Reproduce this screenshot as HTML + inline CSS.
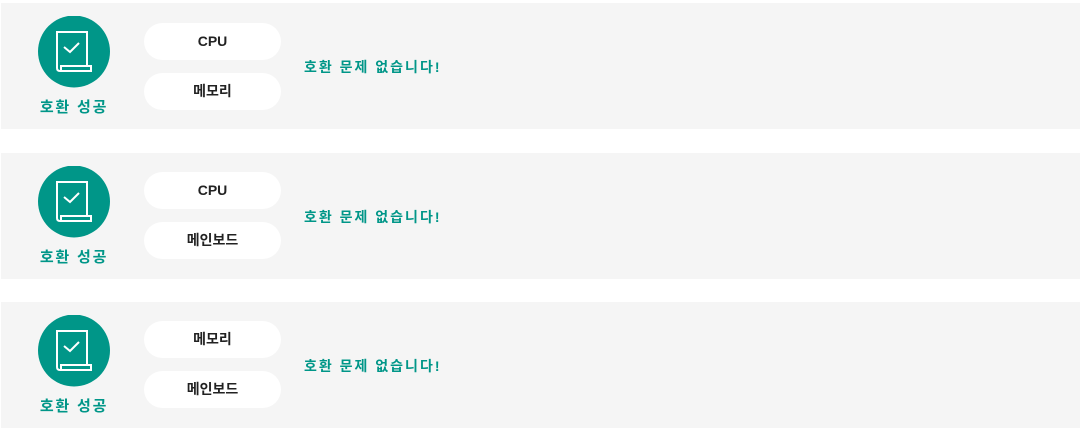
<!DOCTYPE html>
<html><head><meta charset="utf-8"><style>
body{margin:0;width:1082px;height:434px;background:#fff;font-family:"Liberation Sans","Noto Sans CJK KR",sans-serif;position:relative;overflow:hidden}
.p{position:absolute;left:1px;width:1079px;height:126px;background:#f5f5f5}
.ic{position:absolute;left:37px;top:13px}
.lb{position:absolute;left:33px;top:93px;width:80px;text-align:center;color:#009688;font-size:15px;font-weight:bold;letter-spacing:1.8px}
.pill{position:absolute;left:143px;width:137px;height:37px;background:#fff;border-radius:19px;text-align:center;line-height:37px;font-size:14px;font-weight:bold;color:#222}
.msg{position:absolute;left:303px;top:54px;color:#009688;font-size:14px;font-weight:bold;letter-spacing:2px}
</style></head><body>
<div class="p" style="top:3px">
<svg class="ic" width="72" height="72" viewBox="0 0 72 72"><circle cx="36" cy="35.5" r="36" fill="#009688"/><g fill="none" stroke="#fff" stroke-width="2"><path d="M19 52V16h30v33"/><path d="M19 52q0 3 3 3"/><rect x="23" y="50" width="30" height="5"/><path d="M26 31l6 5 9-9"/></g></svg>
<div class="lb">호환 성공</div>
<div class="pill" style="top:20px">CPU</div>
<div class="pill" style="top:70px">메모리</div>
<div class="msg">호환 문제 없습니다!</div>
</div>
<div class="p" style="top:153px">
<svg class="ic" width="72" height="72" viewBox="0 0 72 72"><circle cx="36" cy="35.5" r="36" fill="#009688"/><g fill="none" stroke="#fff" stroke-width="2"><path d="M19 52V16h30v33"/><path d="M19 52q0 3 3 3"/><rect x="23" y="50" width="30" height="5"/><path d="M26 31l6 5 9-9"/></g></svg>
<div class="lb">호환 성공</div>
<div class="pill" style="top:19px">CPU</div>
<div class="pill" style="top:69px">메인보드</div>
<div class="msg">호환 문제 없습니다!</div>
</div>
<div class="p" style="top:302px">
<svg class="ic" width="72" height="72" viewBox="0 0 72 72"><circle cx="36" cy="35.5" r="36" fill="#009688"/><g fill="none" stroke="#fff" stroke-width="2"><path d="M19 52V16h30v33"/><path d="M19 52q0 3 3 3"/><rect x="23" y="50" width="30" height="5"/><path d="M26 31l6 5 9-9"/></g></svg>
<div class="lb">호환 성공</div>
<div class="pill" style="top:19px">메모리</div>
<div class="pill" style="top:69px">메인보드</div>
<div class="msg">호환 문제 없습니다!</div>
</div>
</body></html>
